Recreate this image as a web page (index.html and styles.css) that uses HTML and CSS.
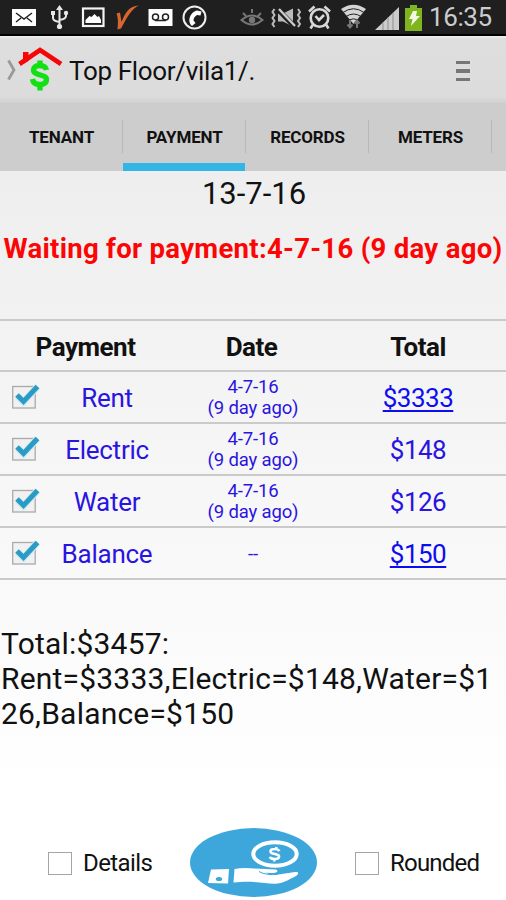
FILE: index.html
```html
<!DOCTYPE html>
<html lang="en">
<head>
    <meta charset="UTF-8">
    <title>Top Floor/vila1/.</title>
    <link rel="stylesheet" href="styles.css">
</head>
<body>
    <div class="status-bar">
        <svg class="status-icons" width="400" height="34" viewBox="0 0 400 34">
            <!-- mail -->
            <rect x="12" y="9" width="24" height="17" fill="#fff"/>
            <path d="M16 13l8 6 8-6M16 22l5-4M32 22l-5-4" fill="none" stroke="#222" stroke-width="1.5"/>
            <!-- usb -->
            <g fill="none" stroke="#e8e8e8" stroke-width="2">
                <path d="M59.500 8v18M53 13v5q0 3 6.500 4M66 12v4q0 3-6.500 4"/>
            </g>
            <path d="M59.500 5l3.500 5h-7zM51 11h4v4h-4z" fill="#e8e8e8"/>
            <circle cx="66" cy="13" r="2.200" fill="#e8e8e8"/>
            <circle cx="59.500" cy="26.500" r="2.600" fill="#e8e8e8"/>
            <!-- picture -->
            <rect x="83" y="8.500" width="20.500" height="17.500" fill="none" stroke="#f4f4f4" stroke-width="2.200"/>
            <path d="M85.500 23v-3l4-4 2 1 3-3 3 3 1.500-1 2 4v3z" fill="#fff"/>
            <!-- orange tick -->
            <path d="M116.500 13.500l3.500-1 1.500 9.500C125 13 129 6 139 5.500c-7 3-11 10-18 23l-3.500 1c.5-6 1-10.500-1-16z" fill="#d9662f"/>
            <!-- voicemail -->
            <rect x="148.500" y="9" width="24" height="17" fill="#fff"/>
            <g fill="none" stroke="#222" stroke-width="1.500">
                <circle cx="155.500" cy="17" r="3"/>
                <circle cx="165.500" cy="17" r="3"/>
                <path d="M155 20.500h11"/>
            </g>
            <!-- call -->
            <circle cx="194.500" cy="17.500" r="11" fill="none" stroke="#eee" stroke-width="2"/>
            <path d="M197 10.500l4.500 1-1 4-3.500-.5c-2.500 1.500-3.500 3.500-3.500 5.500l2 2.500-3.500 3c-5.500-5-1.500-14 5-15.500z" fill="#fff"/>
            <!-- eye -->
            <g fill="none" stroke="#777" stroke-width="2">
                <path d="M241.500 20q10.500-9 21 0q-10.500 9-21 0zM243 13l3 3M252 9v4M261 13l-3 3"/>
            </g>
            <circle cx="252" cy="20" r="3.200" fill="#777"/>
            <!-- vibrate / muted -->
            <path d="M278 13.500h5l10-5v18l-10-5h-5z" fill="#bbb"/>
            <path d="M278 9.500l16 16.500" stroke="#1f1f1f" stroke-width="5"/>
            <path d="M279 9l16 17" stroke="#ccc" stroke-width="2.400"/>
            <path d="M274.500 9l-2 3 2 3-2 3 2 3-2 3 2 3M298 9l2 3-2 3 2 3-2 3 2 3-2 3" fill="none" stroke="#bbb" stroke-width="2"/>
            <!-- alarm -->
            <g fill="none" stroke="#d8d8d8" stroke-width="2.600">
                <circle cx="319.500" cy="18" r="8.800"/>
                <path d="M315.500 16l3.500 4 5-5M309 11.500l5.500-5M330 11.500l-5.500-5M313 24.500l-2.500 4M326 24.500l2.500 4"/>
            </g>
            <!-- wifi -->
            <path d="M341 9q12.500-8.500 25 0L353.500 24z" fill="#d4d4d4"/>
            <path d="M343 12.500q10.500-7.500 21 0M346 16.500q7.500-5 15 0M349 20q4.500-2.500 9 0" fill="none" stroke="#1f1f1f" stroke-width="1"/>
            <path d="M350 20v7M347.500 24.500l2.500 3 2.500-3M357 28v-7M354.500 23.500l2.500-3 2.500 3" fill="none" stroke="#777" stroke-width="2"/>
            <!-- signal -->
            <path d="M375 30l24-23v23z" fill="#ccc"/>
            <path d="M383 22.500v7.500M388 17.500v12.500M393 13v17" stroke="#999" stroke-width="1.200"/>
        </svg>
        <svg class="battery" width="17" height="26" viewBox="0 0 17 26">
            <path d="M0 3h5V0h7v3h5v23H0z" fill="#7fb51e"/>
            <path d="M8 6h4l-1 5h4L6 21l1.500-7H4z" fill="#f2f8e4"/>
        </svg>
        <span class="clock">16:35</span>
    </div>

    <div class="action-bar">
        <svg class="back" width="9" height="22" viewBox="0 0 9 22">
            <path d="M1.500 1.500l5.500 9.500-5.500 9.500" fill="none" stroke="#999" stroke-width="2.800"/>
        </svg>
        <svg class="logo" width="46" height="46" viewBox="0 0 46 46">
            <path d="M2.500 18L23 4l21 14" fill="none" stroke="#f60606" stroke-width="4.600"/>
            <path d="M6 6h5.500v9l-5.500 3z" fill="#f60606"/>
            <path d="M29.500 24q-1-4.500-7-4.500c-4 0-6 2-6 4.500 0 6 13 4 13 9.500 0 3.500-3 5-7 5-4.500 0-6.500-2-7-5.500M23 14.500v5M23 38v6.500" fill="none" stroke="#12e012" stroke-width="5.400"/>
        </svg>
        <h1>Top Floor/vila1/.</h1>
        <div class="menu"><i></i><i></i><i></i></div>
    </div>

    <div class="tabs">
        <div class="tab">TENANT</div>
        <div class="tab active">PAYMENT</div>
        <div class="tab">RECORDS</div>
        <div class="tab">METERS</div>
    </div>

    <div class="content">
        <div class="today">13-7-16</div>
        <div class="waiting">Waiting for payment:4-7-16 (9 day ago)</div>

        <div class="payments">
            <div class="row header">
                <div>Payment</div>
                <div>Date</div>
                <div>Total</div>
            </div>
            <div class="row">
                <div class="name">
                    <svg class="check" width="28" height="25" viewBox="0 0 28 25"><use href="#tick"/></svg>
                    <span>Rent</span>
                </div>
                <div class="date">4-7-16<br>(9 day ago)</div>
                <div class="total"><u>$3333</u></div>
            </div>
            <div class="row">
                <div class="name">
                    <svg class="check" width="28" height="25" viewBox="0 0 28 25"><use href="#tick"/></svg>
                    <span>Electric</span>
                </div>
                <div class="date">4-7-16<br>(9 day ago)</div>
                <div class="total">$148</div>
            </div>
            <div class="row">
                <div class="name">
                    <svg class="check" width="28" height="25" viewBox="0 0 28 25"><use href="#tick"/></svg>
                    <span>Water</span>
                </div>
                <div class="date">4-7-16<br>(9 day ago)</div>
                <div class="total">$126</div>
            </div>
            <div class="row">
                <div class="name">
                    <svg class="check" width="28" height="25" viewBox="0 0 28 25"><use href="#tick"/></svg>
                    <span>Balance</span>
                </div>
                <div class="date">--</div>
                <div class="total"><u>$150</u></div>
            </div>
        </div>

        <div class="summary">Total:$3457:<br>Rent=$3333,Electric=$148,Water=$1<br>26,Balance=$150</div>

        <div class="footer">
            <label class="option details"><span class="box"></span>Details</label>
            <svg class="pay" width="128" height="70" viewBox="0 0 128 70">
                <ellipse cx="63.500" cy="34.500" rx="63.500" ry="34.500" fill="#3da7dc"/>
                <ellipse cx="85" cy="26" rx="21.700" ry="11.700" fill="none" stroke="#fff" stroke-width="4"/>
                <path d="M89.500 23q-1.500-2-4.500-2c-6 0-6 4 0 5s5 5-.5 5q-3.500 0-5-2M86.500 19l-.5 2M84.500 31l-.5 2.500" fill="none" stroke="#fff" stroke-width="2.600"/>
                <path d="M21 41.500l18-.5-1 14.500-20-.5z" fill="#fff"/>
                <ellipse cx="29" cy="51" rx="3.200" ry="2" fill="#3da7dc"/>
                <path d="M44.500 41q8-1.500 20-.5c8 .5 13 .5 21 1 3.500 1 2 3.500-2 3.500l-8-.3c4 1.800 9 2.300 13 1.800l16.500-2.500c4-.5 4 2 1 4-8 4-13 7.500-21 7.800-11 .2-20-3.500-41.500-1.300z" fill="#fff"/>
                <path d="M69 43.500c5 3 12 3.500 18 2.800" fill="none" stroke="#3da7dc" stroke-width="1"/>
            </svg>
            <label class="option rounded"><span class="box"></span>Rounded</label>
        </div>
    </div>

    <!-- shared checkbox drawing -->
    <svg class="defs" width="0" height="0">
        <defs>
            <g id="tick">
                <rect x="0.700" y="2.500" width="22.500" height="21.500" fill="#f1f1f1" stroke="#aaa" stroke-width="1.300"/>
                <path d="M5.500 12l6 6L25.500 2.500" fill="none" stroke="#cfeaf2" stroke-width="7"/>
                <path d="M5 11l6.500 6.500L25.500 2.500" fill="none" stroke="#2a9bc4" stroke-width="5"/>
            </g>
        </defs>
    </svg>
</body>
</html>
```

FILE: styles.css
```css
* {
    box-sizing: border-box;
}
body {
    margin: 0;
    width: 506px;
    height: 900px;
    overflow: hidden;
    font-family: Roboto, sans-serif;
    color: #111;
    display: flex;
    flex-direction: column;
}
.status-bar {
    height: 36px;
    background: #1f1f1f;
    border-bottom: 2px solid #000;
    display: flex;
    align-items: flex-start;
}
.battery {
    margin: 5px 0 0 5px;
}
.clock {
    margin-left: 7px;
    font-size: 26px;
    line-height: 35px;
    color: #ccc;
    letter-spacing: -0.4px;
}
.action-bar {
    height: 67px;
    background: linear-gradient(#f0f0f0 0, #dedede 3px, #dcdcdc 60px, #d2d2d2 100%);
    display: flex;
    align-items: center;
}
.back {
    margin-left: 7px;
}
.logo {
    margin: 0 0 2px 1px;
}
h1 {
    margin: 2px auto 0 6px;
    font-size: 26px;
    font-weight: normal;
    line-height: 30px;
    letter-spacing: -0.33px;
}
.menu {
    width: 14px;
    margin: 3px 36px 0 0;
    display: flex;
    flex-direction: column;
    gap: 5px;
}
.menu i {
    height: 3.500px;
    background: #777;
}
.tabs {
    height: 68px;
    background: #cdcdcd;
    display: flex;
}
.tab {
    position: relative;
    width: 123px;
    text-align: center;
    font-size: 17px;
    font-weight: bold;
    line-height: 69px;
    letter-spacing: -0.15px;
}
.tab::after {
    content: "";
    position: absolute;
    right: 0;
    top: 17px;
    width: 1px;
    height: 33px;
    background: #b9b9b9;
}
.tab.active::before {
    content: "";
    position: absolute;
    left: 0;
    right: 1px;
    bottom: 0;
    height: 8px;
    background: #33b5e5;
}
.content {
    flex: 1;
    background: linear-gradient(#eee, #fff 85%);
    display: flex;
    flex-direction: column;
}
.today {
    margin-top: 4px;
    font-size: 31px;
    line-height: 38px;
    text-align: center;
    padding-left: 2px;
}
.waiting {
    margin-top: 19px;
    font-size: 27.500px;
    font-weight: bold;
    line-height: 34px;
    letter-spacing: 0.3px;
    text-align: center;
    white-space: nowrap;
    color: #fb0505;
}
.payments {
    margin-top: 53px;
    border-top: 2px solid #cacaca;
    font-size: 26px;
    letter-spacing: -0.25px;
    color: #2a14e0;
}
.row {
    display: grid;
    grid-template-columns: 171px 161px 172px;
    align-items: center;
    height: 52px;
    border-bottom: 2px solid #cacaca;
    text-align: center;
}
.row.header {
    height: 51px;
    padding-top: 3px;
    font-weight: bold;
    letter-spacing: -0.5px;
    color: #111;
}
.name {
    display: flex;
    align-items: center;
    padding: 1px 0 0 12px;
}
.name span {
    flex: 1;
    padding-left: 3px;
}
.check {
    margin-bottom: 3px;
}
.date {
    padding: 2px 0 0 3px;
    font-size: 18.500px;
    line-height: 21px;
    letter-spacing: -0.15px;
}
.total {
    padding-top: 1px;
    letter-spacing: -0.5px;
}
.total u {
    text-decoration-thickness: 1.500px;
    text-underline-offset: 3px;
    color: #0d0df0;
}
.summary {
    margin: 46px 0 0 1px;
    font-size: 30px;
    line-height: 35px;
    letter-spacing: 0.2px;
    white-space: nowrap;
}
.footer {
    margin: auto 0 2px;
    display: flex;
    align-items: center;
}
.option {
    display: flex;
    align-items: center;
    gap: 11px;
    font-size: 24px;
    letter-spacing: -0.6px;
}
.details {
    width: 142px;
    margin-left: 48px;
}
.rounded {
    margin-left: 37px;
    letter-spacing: -0.8px;
}
.box {
    width: 24px;
    height: 23px;
    border: 1.500px solid #a5a5a5;
    background: #fff;
}
.defs {
    position: absolute;
}
```
